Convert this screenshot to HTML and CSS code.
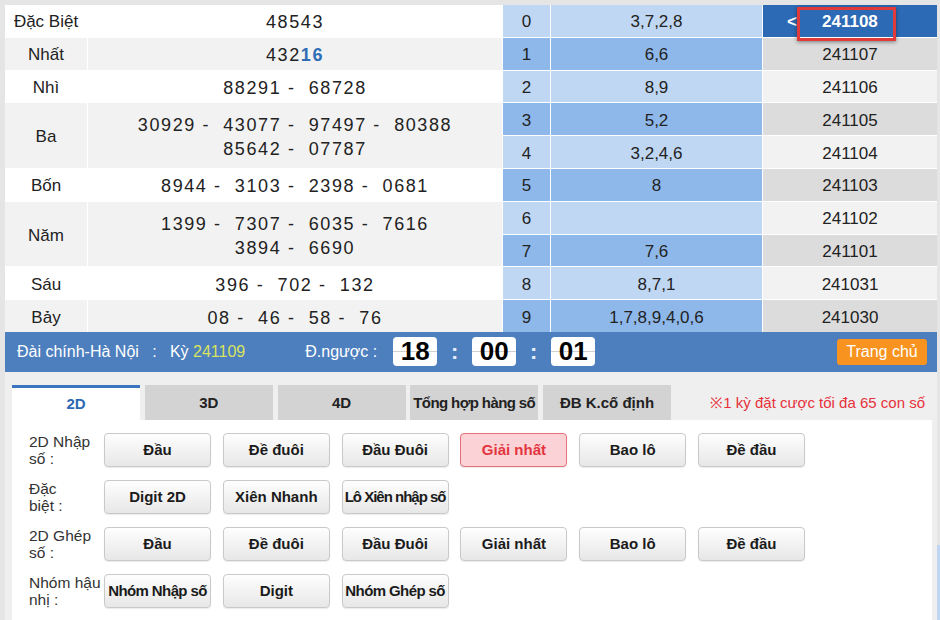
FILE: index.html
```html
<!DOCTYPE html>
<html lang="vi">
<head>
<meta charset="utf-8">
<title>Đài chính-Hà Nội</title>
<link rel="stylesheet" href="styles.css">
</head>
<body>
<div class="page">
  <div class="main">
    <div class="results">
      <div class="lbl w">Đặc Biệt</div><div class="val w">48543</div>
      <div class="idx l">0</div><div class="dig l">3,7,2,8</div>
      <div class="per cur"><span class="arrow">&lt;</span><span>241108</span><span class="mark"></span></div>

      <div class="lbl g">Nhất</div><div class="val g"><span>432<span class="hl">16</span></span></div>
      <div class="idx d">1</div><div class="dig d">6,6</div><div class="per pd">241107</div>

      <div class="lbl w">Nhì</div><div class="val w">88291 -&nbsp; 68728</div>
      <div class="idx l">2</div><div class="dig l">8,9</div><div class="per pg">241106</div>

      <div class="lbl g tall">Ba</div><div class="val g tall"><span>30929 -&nbsp; 43077 -&nbsp; 97497 -&nbsp; 80388<br>85642 -&nbsp; 07787</span></div>
      <div class="idx d">3</div><div class="dig d">5,2</div><div class="per pd">241105</div>
      <div class="idx l">4</div><div class="dig l">3,2,4,6</div><div class="per pg">241104</div>

      <div class="lbl w">Bốn</div><div class="val w">8944 -&nbsp; 3103 -&nbsp; 2398 -&nbsp; 0681</div>
      <div class="idx d">5</div><div class="dig d">8</div><div class="per pd">241103</div>

      <div class="lbl g tall">Năm</div><div class="val g tall"><span>1399 -&nbsp; 7307 -&nbsp; 6035 -&nbsp; 7616<br>3894 -&nbsp; 6690</span></div>
      <div class="idx l">6</div><div class="dig l"></div><div class="per pg">241102</div>
      <div class="idx d">7</div><div class="dig d">7,6</div><div class="per pd">241101</div>

      <div class="lbl w">Sáu</div><div class="val w">396 -&nbsp; 702 -&nbsp; 132</div>
      <div class="idx l">8</div><div class="dig l">8,7,1</div><div class="per pg">241031</div>

      <div class="lbl g">Bảy</div><div class="val g">08 -&nbsp; 46 -&nbsp; 58 -&nbsp; 76</div>
      <div class="idx d">9</div><div class="dig d">1,7,8,9,4,0,6</div><div class="per pd">241030</div>
    </div>

    <div class="bar">
      <span class="station">Đài chính-Hà Nội&nbsp;&nbsp; :&nbsp;&nbsp; Kỳ <span class="ky">241109</span></span>
      <span class="cd-label">Đ.ngược :</span>
      <span class="tbox">18</span><span class="colon">:</span><span class="tbox">00</span><span class="colon">:</span><span class="tbox">01</span>
      <span class="home">Trang chủ</span>
    </div>

    <div class="lower">
      <div class="tabs">
        <div class="tab on">2D</div>
        <div class="tab">3D</div>
        <div class="tab">4D</div>
        <div class="tab tight2">Tổng hợp hàng số</div>
        <div class="tab">ĐB K.cố định</div>
        <div class="note">※1 kỳ đặt cược tối đa 65 con số</div>
      </div>
      <div class="panel">
        <div class="row">
          <div class="rlbl">2D Nhập<br>số :</div>
          <div class="btns">
            <button class="btn">Đầu</button>
            <button class="btn">Đề đuôi</button>
            <button class="btn">Đầu Đuôi</button>
            <button class="btn on">Giải nhất</button>
            <button class="btn">Bao lô</button>
            <button class="btn">Đề đầu</button>
          </div>
        </div>
        <div class="row">
          <div class="rlbl">Đặc<br>biệt :</div>
          <div class="btns">
            <button class="btn">Digit 2D</button>
            <button class="btn">Xiên Nhanh</button>
            <button class="btn tight">Lô Xiên nhập số</button>
          </div>
        </div>
        <div class="row">
          <div class="rlbl">2D Ghép<br>số :</div>
          <div class="btns">
            <button class="btn">Đầu</button>
            <button class="btn">Đề đuôi</button>
            <button class="btn">Đầu Đuôi</button>
            <button class="btn">Giải nhất</button>
            <button class="btn">Bao lô</button>
            <button class="btn">Đề đầu</button>
          </div>
        </div>
        <div class="row">
          <div class="rlbl">Nhóm hậu<br>nhị :</div>
          <div class="btns">
            <button class="btn tight2">Nhóm Nhập số</button>
            <button class="btn">Digit</button>
            <button class="btn tight2">Nhóm Ghép số</button>
          </div>
        </div>
      </div>
    </div>
  </div>
  <div class="rail"><div class="rail-thumb"></div></div>
</div>
</body>
</html>
```

FILE: styles.css
```css
* { box-sizing: border-box; }
html, body { margin: 0; padding: 0; }
body {
  background: #e5e5e5;
  font-family: "Liberation Sans", Arial, sans-serif;
  color: #222;
  width: 940px;
  height: 620px;
  overflow: hidden;
}
.page { display: flex; padding-top: 5px; }
.main { width: 937px; flex: none; padding-left: 5px; }
.rail { width: 3px; flex: none; display: flex; flex-direction: column; }
.rail-thumb { margin-top: 540px; height: 80px; background: #bfd5f1; }

/* results grid */
.results {
  display: grid;
  grid-template-columns: 82px 414px 47px 211px 174px;
  grid-auto-rows: 31.8px;
  gap: 1px;
  background: #fff;
}
.results > div {
  display: flex;
  align-items: center;
  justify-content: center;
  text-align: center;
  padding-top: 3px;
}
.tall { grid-row: span 2; }
.lbl { font-size: 17px; }
.val { font-size: 18px; letter-spacing: 1.6px; line-height: 24px; }
.w { background: #fff; }
.g { background: #f2f2f2; }
.hl { color: #2f6db5; font-weight: bold; }
.idx, .dig, .per { font-size: 17px; }
.l { background: #c0d7f3; }
.d { background: #8fb8ea; }
.pg { background: #f2f2f2; }
.pd { background: #dcdcdc; }
.results > .cur {
  background: #2d6ab5;
  color: #fff;
  font-weight: bold;
  position: relative;
  justify-content: flex-start;
  padding-left: 24px;
}
.arrow { width: 35px; text-align: left; }
.mark {
  position: absolute;
  left: 34px;
  top: 2px;
  width: 99px;
  height: 34px;
  border: 3px solid #e03a3a;
  box-shadow: 0 1px 4px rgba(0, 0, 0, 0.45);
  z-index: 2;
}

/* blue bar */
.bar {
  height: 40px;
  background: #4d7fbe;
  display: flex;
  align-items: center;
  padding: 0 10px 0 12px;
  color: #fff;
  font-size: 16px;
}
.station { white-space: nowrap; }
.ky { color: #d8e35f; }
.cd-label { margin-left: 60px; white-space: nowrap; }
.tbox {
  width: 44px;
  height: 29px;
  margin-left: 16px;
  border-radius: 4px;
  background: linear-gradient(#fff 0, #fff 14px, #cfcfcf 14px, #cfcfcf 15px, #fff 15px);
  color: #000;
  font-weight: bold;
  font-size: 26px;
  display: flex;
  align-items: center;
  justify-content: center;
}
.colon + .tbox { margin-left: 0; }
.colon {
  width: 35px;
  text-align: center;
  font-weight: bold;
  font-size: 22px;
  color: #e6eefa;
}
.home {
  margin-left: auto;
  width: 90px;
  height: 26px;
  border-radius: 3px;
  background: #f7931e;
  color: #fff;
  font-size: 16px;
  display: flex;
  align-items: center;
  justify-content: center;
}

/* lower section */
.lower {
  background: #efefef;
  padding: 13px 5px 0 7px;
  height: 248px;
}
.tabs { display: flex; gap: 4.75px; height: 35px; }
.tab {
  width: 128px;
  flex: none;
  background: #d3d3d3;
  font-weight: bold;
  font-size: 15px;
  color: #222;
  display: flex;
  align-items: center;
  justify-content: center;
  white-space: nowrap;
}
.tab.on {
  background: #fff;
  border-top: 3px solid #3a75bf;
  color: #2d68b2;
}
.note {
  margin-left: auto;
  margin-right: 7px;
  align-self: center;
  color: #e6323c;
  font-size: 15px;
  white-space: nowrap;
}
.panel {
  background: #fff;
  padding: 13px 0 13px 17px;
  display: flex;
  flex-direction: column;
  gap: 13px;
  height: 213px;
}
.row { display: flex; align-items: center; }
.rlbl {
  width: 75px;
  flex: none;
  font-size: 15.5px;
  line-height: 17px;
  color: #333;
  white-space: nowrap;
}
.btns { display: flex; gap: 11.8px; }
.btn {
  width: 107px;
  height: 34px;
  padding: 0;
  border: 1px solid #c9c9c9;
  border-radius: 4px;
  background: linear-gradient(#fefefe, #e7e7e7);
  box-shadow: 0 1px 1px rgba(0, 0, 0, 0.08);
  font-family: "Liberation Sans", Arial, sans-serif;
  font-weight: bold;
  font-size: 15px;
  color: #1b1b1b;
  white-space: nowrap;
  display: flex;
  align-items: center;
  justify-content: center;
}
.btn.on {
  background: #fbd2d5;
  border-color: #e3727b;
  color: #e2353f;
}
.tight { letter-spacing: -1px; }
.tight2 { letter-spacing: -0.6px; }
```
